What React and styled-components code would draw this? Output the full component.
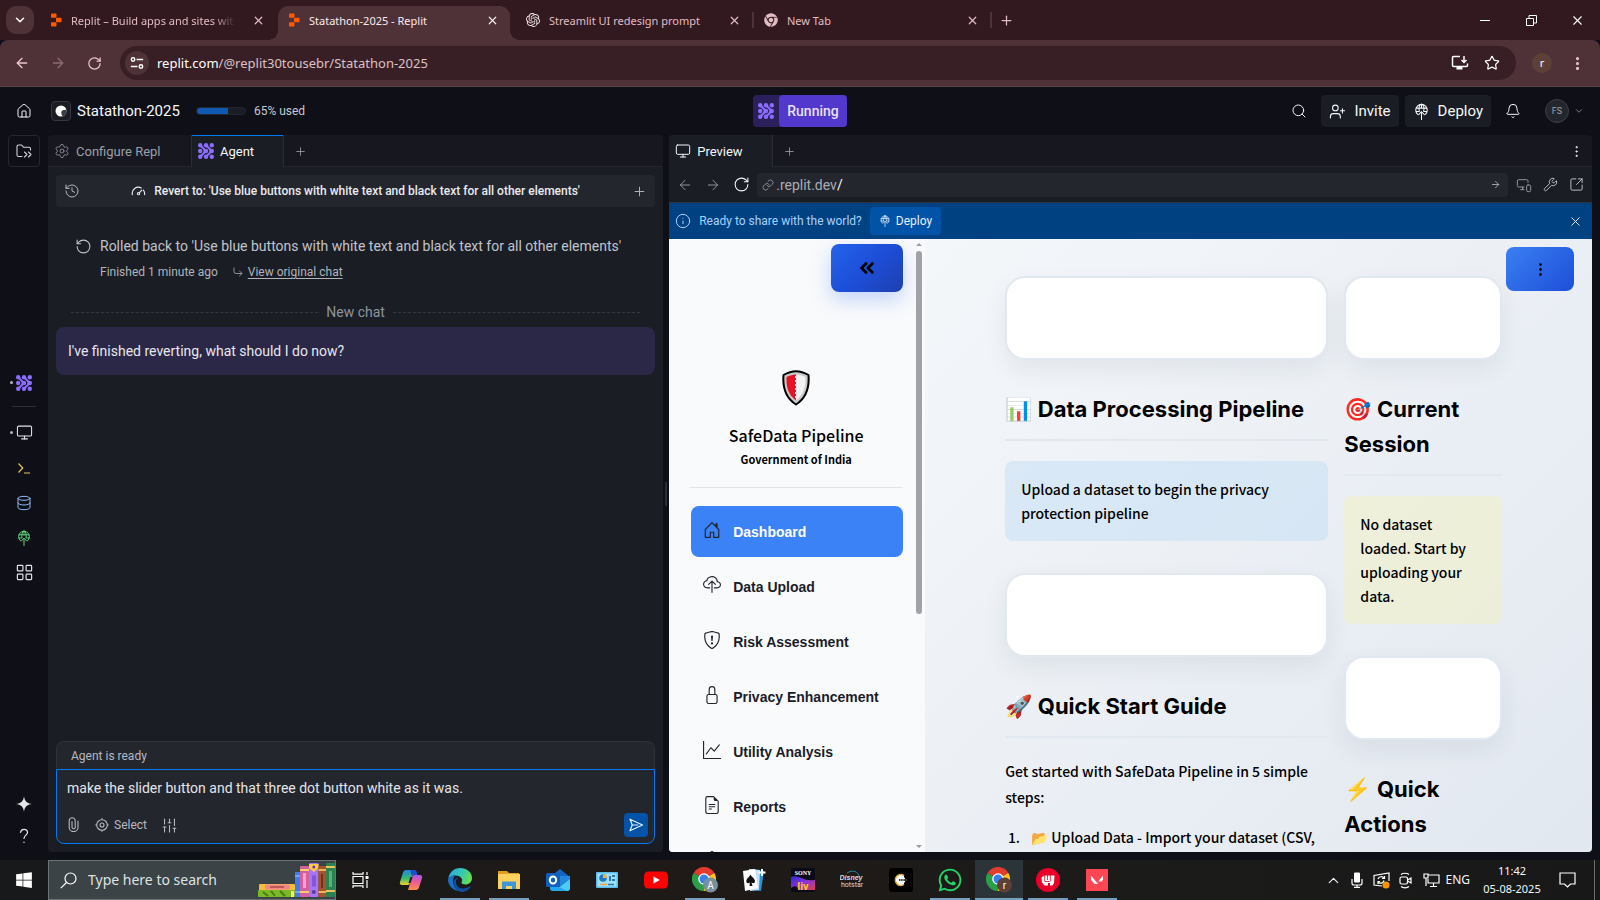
import React from "react";
import styled, { createGlobalStyle, css } from "styled-components";
import {
  House, Search, UserPlus, Bell, ChevronDown, ChevronUp, Monitor, Database, LayoutGrid, Plus,
  History, RotateCcw, RotateCw, CornerDownRight, Link, ArrowLeft, ArrowRight, Wrench, SquareArrowOutUpRight,
  MonitorSmartphone, Info, X, Star, Settings, EllipsisVertical, SlidersVertical, ChevronsLeft,
} from "lucide-react";
import {
  BsHouseDoor, BsCloudUpload, BsShieldExclamation, BsLock, BsGraphUp, BsFileEarmarkText, BsGear,
} from "react-icons/bs";
import { FaWindows, FaChrome, FaWhatsapp } from "react-icons/fa";
import { SiOpenai } from "react-icons/si";

const GlobalStyle = createGlobalStyle`
  *, *::before, *::after { box-sizing: border-box; }
  body { margin: 0; background: #0f0f17; font-family: Roboto, "Liberation Sans", sans-serif; }
  button, input, textarea { font: inherit; color: inherit; background: none; border: 0; padding: 0; margin: 0; outline: 0; }
  button { cursor: pointer; }
  h1, h2, p, ul, ol { margin: 0; padding: 0; }
  svg { display: block; flex: none; }
`;

const segoe = `"Noto Sans", "Open Sans", sans-serif`;
const sourceSans = `"Noto Sans CJK SC", "Noto Sans", sans-serif`;

const Screen = styled.div`
  display: flex;
  flex-direction: column;
  height: 100vh;
  overflow: hidden;
  background: #0f0f17;
  color: #f5f7fa;
`;

/* ---------- Browser frame ---------- */
const TabStrip = styled.div`
  display: flex;
  height: 40px;
  flex: none;
  align-items: flex-end;
  background: #31191f;
  color: #e3bcc3;
  font: 11px/16px ${segoe};
`;
const TabSearch = styled.button`
  display: grid;
  place-items: center;
  width: 28px;
  height: 28px;
  margin: 0 6px 6px;
  border-radius: 10px;
  background: #4f3238;
  color: #fff;
`;
const BrowserTab = styled.div`
  position: relative;
  display: flex;
  align-items: center;
  width: ${(p) => (p.$active ? 232 : 236)}px;
  height: 34px;
  margin: ${(p) => (p.$active ? "0 6px 0 2px" : 0)};
  padding: 0 10px 6px;
  border-radius: 10px 10px 0 0;
  background: ${(p) => (p.$active ? "#4f3238" : "transparent")};
  color: ${(p) => (p.$active ? "#fbe9ec" : "#e3bcc3")};
  ${(p) => p.$active && css`
    &::before, &::after {
      content: "";
      position: absolute;
      bottom: 0;
      width: 10px;
      height: 10px;
    }
    &::before { left: -10px; background: radial-gradient(circle at 0 0, transparent 10px, #4f3238 10px); }
    &::after { right: -10px; background: radial-gradient(circle at 100% 0, transparent 10px, #4f3238 10px); }
  `}
`;
const TabTitle = styled.span`
  flex: 1;
  min-width: 0;
  margin: 2px 12px 0 9px;
  white-space: nowrap;
  overflow: hidden;
`;
const TitleFade = styled.span`
  mask-image: linear-gradient(90deg, #000 calc(100% - 20px), rgba(0, 0, 0, 0.15));
`;
const PlainButton = styled.button`
  display: grid;
  place-items: center;
  flex: none;
  width: ${(p) => p.$w || 16}px;
  height: ${(p) => p.$h || 16}px;
  color: ${(p) => p.$color || "inherit"};
`;
const TabDivider = styled.i`
  width: 2px;
  height: 16px;
  margin-bottom: 12px;
  background: #4f3238;
`;
const NewTab = styled(PlainButton)`
  margin: 0 auto 6px 0;
`;
const WindowControls = styled.div`
  display: flex;
  align-self: stretch;
  color: #fff;
`;

const AddressBar = styled.div`
  display: flex;
  align-items: center;
  flex: none;
  height: 47px;
  padding: 0 6px 0 8px;
  background: #4f3238;
  border-bottom: 1px solid #5a4448;
  border-radius: 8px 8px 0 0;
  color: #edc5cc;
`;
const Omnibox = styled.label`
  display: flex;
  flex: 1;
  align-items: center;
  height: 34px;
  margin: 0 16px 0 12px;
  padding: 0 8px 0 5px;
  border-radius: 17px;
  background: #381f25;
  font: 13px/20px ${segoe};
  color: #fff;
`;
const SiteInfo = styled.span`
  display: grid;
  place-items: center;
  width: 24px;
  height: 24px;
  margin-right: 8px;
  border-radius: 12px;
  background: #4f3238;
`;
const UrlInput = styled.input`
  flex: 1;
  min-width: 0;
  color: #dcc2c6;
`;
const Profile = styled.button`
  width: 20px;
  height: 20px;
  margin-right: 8px;
  border-radius: 10px;
  background: #5d4037;
  color: #fff;
  font: 11px/18px ${segoe};
`;

/* ---------- Replit header ---------- */
const Header = styled.header`
  display: grid;
  grid-template-columns: 1fr auto 1fr;
  align-items: center;
  flex: none;
  height: 48px;
  padding: 0 16px;
`;
const HeaderSide = styled.div`
  display: flex;
  align-items: center;
  justify-content: ${(p) => (p.$end ? "flex-end" : "flex-start")};
`;
const ReplBadge = styled.span`
  display: grid;
  place-items: center;
  width: 20px;
  height: 20px;
  margin: 0 6px 0 19px;
  border: 1px solid #353842;
  border-radius: 4px;
  background: #1a1d24;
`;
const ReplName = styled.h1`
  font: 400 15px/20px Roboto, sans-serif;
`;
const Usage = styled.div`
  display: flex;
  align-items: center;
  gap: 8px;
  margin-left: 16px;
  font-size: 12px;
  color: #c6c9d0;
`;
const Meter = styled.span`
  width: 50px;
  height: 8px;
  border: 1px solid #22252e;
  border-radius: 4px;
  overflow: hidden;
  background: #1a1d24;
  &::before {
    content: "";
    display: block;
    width: 65%;
    height: 100%;
    background: #0f59b0;
  }
`;
const RunPill = styled.div`
  display: flex;
  height: 32px;
  border-radius: 4px;
  background: #2b1f5c;
`;
const RunIcon = styled.span`
  display: grid;
  place-items: center;
  width: 26px;
`;
const RunButton = styled.button`
  width: 68px;
  border-radius: 4px;
  background: #5238cc;
  color: #e6e1fb;
  font-size: 14px;
  font-weight: 500;
`;
const HeaderButton = styled.button`
  display: flex;
  align-items: center;
  gap: 8px;
  height: 32px;
  margin-right: 6px;
  padding: 0 8px;
  border-radius: 4px;
  background: #1a1d24;
  font-size: 15px;
`;
const Avatar = styled.button`
  width: 24px;
  height: 24px;
  margin: 0 5px 0 16px;
  border: 1px solid #3b3e48;
  border-radius: 12px;
  background: #24262e;
  color: #9da2a6;
  font-size: 9px;
`;

/* ---------- Workspace ---------- */
const Workspace = styled.main`
  display: grid;
  grid-template-columns: 48px minmax(0, 2fr) 6px minmax(0, 3fr);
  flex: 1;
  min-height: 0;
  padding: 0 8px 8px 0;
`;
const Rail = styled.nav`
  display: flex;
  flex-direction: column;
  justify-content: space-between;
  align-items: center;
`;
const FolderButton = styled.button`
  display: grid;
  place-items: center;
  width: 32px;
  height: 32px;
  border: 1px solid #252730;
  border-radius: 4px;
  color: #d0d3d9;
`;
const RailGroup = styled.div`
  display: flex;
  flex-direction: column;
  align-items: center;
  padding-top: 5px;
`;
const RailButton = styled.button`
  position: relative;
  display: grid;
  place-items: center;
  width: 32px;
  height: ${(p) => p.$h || 35}px;
  color: ${(p) => p.$color || "#e3e5e9"};
  ${(p) => p.$dot && css`
    &::before {
      content: "";
      position: absolute;
      left: 2px;
      width: 3px;
      height: 3px;
      border-radius: 2px;
      background: #b3b6bd;
    }
  `}
`;
const RailDivider = styled.hr`
  width: 24px;
  height: 1px;
  margin: 6px 0 8px;
  border: 0;
  background: #2b2d36;
`;
const Panel = styled.section`
  display: flex;
  flex-direction: column;
  min-width: 0;
  min-height: 0;
  overflow: hidden;
  border-radius: 4px;
  background: #1a1d24;
`;
const Splitter = styled.div`
  display: grid;
  place-items: center;
  &::before {
    content: "";
    width: 2px;
    height: 24px;
    background: #2b2d36;
  }
`;
const PaneTabs = styled.div`
  display: flex;
  flex: none;
  height: 32px;
  background: linear-gradient(#24262e, #24262e) 0 100% / 100% 1px no-repeat #16171f;
`;
const PaneTab = styled.button`
  display: flex;
  align-items: center;
  gap: 6px;
  width: ${(p) => p.$w}px;
  padding: 0 6px;
  font-size: 13px;
  color: ${(p) => (p.$active ? "#f5f7fa" : "#9ba0a9")};
  ${(p) => p.$active && css`
    background: #1a1d24;
    border-right: 1px solid #2b2d36;
  `}
  ${(p) => p.$focus && css`
    border-left: 1px solid #2b2d36;
    box-shadow: inset 0 1px #0079f2;
  `}
`;
const PaneMore = styled(PlainButton)`
  margin-left: auto;
`;

/* ---------- Agent pane ---------- */
const AgentBody = styled.div`
  display: flex;
  flex-direction: column;
  flex: 1;
  min-height: 0;
  padding: 8px 8px 8px;
`;
const RevertBar = styled.div`
  display: flex;
  align-items: center;
  justify-content: space-between;
  height: 32px;
  padding: 0 8px;
  border-radius: 4px;
  background: #24262e;
  color: #b3b7c0;
`;
const RevertTitle = styled.p`
  display: flex;
  align-items: center;
  gap: 8px;
  color: #e9ebef;
  font-size: 12px;
  font-weight: 500;
  white-space: nowrap;
`;
const Rollback = styled.div`
  display: grid;
  grid-template-columns: 16px 1fr;
  column-gap: 9px;
  row-gap: 6px;
  align-items: center;
  margin-top: 29px;
  padding-left: 19px;
  color: #c0c4cc;
  font-size: 14px;
  line-height: 20px;
  white-space: nowrap;
`;
const RollbackMeta = styled.p`
  display: flex;
  align-items: center;
  grid-column: 2;
  gap: 4px;
  font-size: 12px;
  color: #b0b4bc;
  > svg { margin-left: 10px; }
  a { color: inherit; text-underline-offset: 2px; }
`;
const ChatDivider = styled.div`
  display: flex;
  align-items: center;
  gap: 8px;
  margin: 20px 15px 0;
  color: #8f949d;
  font-size: 14px;
  line-height: 20px;
  &::before, &::after {
    content: "";
    flex: 1;
    border-top: 1px dashed #353842;
  }
`;
const AgentMessage = styled.p`
  margin-top: 5px;
  padding: 14px 12px;
  border-radius: 8px;
  background: #2b2746;
  color: #e6e7ee;
  font-size: 14px;
  line-height: 20px;
`;
const Composer = styled.form`
  margin-top: auto;
`;
const ComposerStatus = styled.p`
  height: 28px;
  padding: 0 14px;
  border: 1px solid #2f313b;
  border-bottom: 0;
  border-radius: 8px 8px 0 0;
  background: #24262e;
  color: #b5b9c1;
  font-size: 12px;
  line-height: 28px;
`;
const ComposerBox = styled.div`
  border: 1px solid #0079f2;
  border-radius: 0 0 8px 8px;
  background: #24262e;
`;
const Prompt = styled.textarea`
  display: block;
  width: 100%;
  height: 36px;
  padding: 8px 10px;
  resize: none;
  overflow: hidden;
  color: #e3e5ea;
  font-size: 14px;
  line-height: 20px;
`;
const ComposerTools = styled.div`
  display: flex;
  align-items: center;
  gap: 14px;
  height: 37px;
  padding: 0 6px 0 8px;
  color: #b5b9c1;
  font-size: 12px;
`;
const SelectTool = styled.button`
  display: flex;
  align-items: center;
  gap: 5px;
`;
const SendButton = styled.button`
  display: grid;
  place-items: center;
  width: 24px;
  height: 24px;
  margin-left: auto;
  border-radius: 4px;
  background: #0053a6;
`;

/* ---------- Preview pane ---------- */
const NavBar = styled.div`
  display: flex;
  align-items: center;
  flex: none;
  height: 36px;
  padding: 0 3px 0 2px;
  border-bottom: 1px solid #2f313b;
  color: #8f949d;
`;
const UrlBox = styled.label`
  display: flex;
  align-items: center;
  flex: 1;
  height: 24px;
  margin: 0 3px 0 2px;
  padding: 0 2px 0 5px;
  border-radius: 4px;
  background: #24262e;
  color: #a9adb5;
  font-size: 14px;
  > svg { margin-right: 2px; }
`;
const PathInput = styled.input`
  flex: 1;
  min-width: 0;
  color: #f5f7fa;
`;
const ShareBar = styled.div`
  display: flex;
  align-items: center;
  flex: none;
  gap: 8px;
  height: 36px;
  padding: 0 9px 0 6px;
  background: #004182;
  color: #a6d2ff;
  font-size: 12px;
`;
const ShareDeploy = styled.button`
  display: flex;
  align-items: center;
  gap: 5px;
  height: 28px;
  margin-right: auto;
  padding: 0 9px;
  border-radius: 4px;
  background: #0053a6;
  color: #e6f2ff;
`;
const Site = styled.div`
  position: relative;
  display: flex;
  flex: 1;
  min-height: 0;
  color: #000;
  background: linear-gradient(135deg, #f8fafc 0%, #e2e8f0 100%);
`;
const Sidebar = styled.aside`
  display: flex;
  flex: none;
  width: 256px;
  overflow: hidden;
  background: #f9fafc;
`;
const SidebarBody = styled.div`
  display: flex;
  flex-direction: column;
  flex: 1;
  padding: 5px 10px 0 20px;
`;
const GradientButton = styled.button`
  display: grid;
  place-items: center;
  border-radius: 8px;
  color: #000;
`;
const CollapseButton = styled(GradientButton)`
  flex: none;
  align-self: flex-end;
  width: 72px;
  height: 48px;
  background: linear-gradient(135deg, #2563eb 0%, #1d4ed8 50%, #1e40af 100%);
  box-shadow: 0 8px 20px rgba(37, 99, 235, 0.25);
`;
const SiteMenuButton = styled(GradientButton)`
  position: absolute;
  top: 8px;
  right: 18px;
  width: 68px;
  height: 44px;
  background: linear-gradient(135deg, #3b7ff3 0%, #1d4fd8 100%);
`;
const Brand = styled.div`
  display: flex;
  flex: none;
  flex-direction: column;
  align-items: center;
  margin-top: 78px;
  padding-bottom: 18px;
  border-bottom: 1px solid #e2e5ea;
  font-family: ${sourceSans};
`;
const BrandName = styled.h2`
  margin-top: 17px;
  font-size: 16px;
  font-weight: 500;
  line-height: 24px;
`;
const BrandSub = styled.p`
  margin-top: 2px;
  font-size: 11px;
  font-weight: 700;
  line-height: 20px;
`;
const SiteNav = styled.nav`
  display: flex;
  flex-direction: column;
  gap: 4px;
  padding: 18px 0 0 2px;
`;
const SiteLink = styled.a`
  display: flex;
  align-items: center;
  flex: none;
  gap: 12px;
  height: 51px;
  padding: 0 12px;
  border-radius: 8px;
  background: ${(p) => (p.$active ? "#3b82f6" : "transparent")};
  color: ${(p) => (p.$active ? "#fff" : "#1a1d29")};
  font: bold 14px/20px "Liberation Sans", Arial, sans-serif;
  text-decoration: none;
  svg { margin-bottom: 4px; color: #212529; }
`;
const ScrollRail = styled.div`
  display: flex;
  flex-direction: column;
  align-items: center;
  width: 12px;
  padding: 4px 0;
  color: #9c9ca3;
  &::before {
    content: "";
    border: 3px solid transparent;
    border-top: 0;
    border-bottom: 3px solid currentColor;
  }
  &::after {
    content: "";
    margin-top: auto;
    border: 3px solid transparent;
    border-bottom: 0;
    border-top: 3px solid currentColor;
  }
`;
const ScrollThumb = styled.i`
  width: 6px;
  height: 60%;
  margin-top: 5px;
  border-radius: 3px;
  background: #a1a1aa;
`;
const SiteMain = styled.div`
  display: grid;
  grid-template-columns: minmax(0, 205fr) minmax(0, 100fr);
  gap: 16px;
  flex: 1;
  align-items: start;
  overflow: hidden;
  padding: 37px 90px 0 80px;
  font: 500 14px/24px ${sourceSans};
`;
const Card = styled.div`
  height: 84px;
  border: 2px solid #e2e8f0;
  border-radius: 20px;
  background: #fff;
  box-shadow: 0 10px 24px rgba(30, 41, 59, 0.07);
`;
const SectionTitle = styled.h2`
  margin: 32px 0 20px;
  padding-bottom: 12px;
  border-bottom: 2px solid #e2e8f0;
  font: 700 22px/35px Inter, "Noto Color Emoji", sans-serif;
`;
const Notice = styled.p`
  margin-bottom: 32px;
  padding: 16px 24px 16px 16px;
  border-radius: 8px;
  background: ${(p) => (p.$warn ? "rgba(240, 240, 200, 0.6)" : "rgba(191, 219, 245, 0.45)")};
`;
const Intro = styled.p`
  line-height: 26px;
`;
const Steps = styled.ol`
  margin-top: 14px;
  padding-left: 18px;
  line-height: 26px;
  white-space: nowrap;
  li { padding-left: 8px; }
`;

/* ---------- Taskbar ---------- */
const Taskbar = styled.footer`
  display: flex;
  flex: none;
  height: 40px;
  background: linear-gradient(90deg, #17191a, #1f1a17 45%, #1b1b1a 70%, #171817);
  font: 12px/18px ${segoe};
`;
const WinSearch = styled.label`
  display: flex;
  align-items: center;
  width: 288px;
  padding-left: 11px;
  border: 1px solid #6d7476;
  background: #3b4346;
`;
const WinSearchInput = styled.input`
  flex: 1;
  min-width: 0;
  margin-left: 11px;
  font-size: 14px;
  &::placeholder { color: #dfe2e3; opacity: 1; }
`;
const TaskButton = styled.button`
  display: grid;
  place-items: center;
  flex: none;
  width: 48px;
  margin-right: ${(p) => p.$gap || 1}px;
  color: #fff;
  background:
    linear-gradient(#76a0ba, #76a0ba) 50% 100% / ${(p) => (p.$active ? 48 : p.$open ? 40 : 0)}px 2px no-repeat
    ${(p) => (p.$active ? "#2b3438" : "transparent")};
`;
const Tray = styled.div`
  display: flex;
  align-items: center;
  margin-left: auto;
`;
const Clock = styled.time`
  width: 60px;
  margin: 0 16px 0 12px;
  font-size: 11px;
  text-align: center;
`;
const DesktopEdge = styled.i`
  align-self: stretch;
  width: 6px;
  margin-left: 18px;
  border-left: 1px solid #6d6d6d;
`;

/* ---------- Drawings ---------- */
const ReplitMark = () => (
  <svg width="12" height="14" viewBox="0 0 12 14" fill="#ff5a00">
    <rect x="1" y="0.5" width="5.5" height="4.3" rx="0.8" />
    <rect x="6" y="4.8" width="5.5" height="4.4" rx="0.8" />
    <rect x="1" y="9.2" width="5.5" height="4.3" rx="0.8" />
  </svg>
);
const AgentMark = () => (
  <svg width="16" height="16" viewBox="0 0 16 16" fill="#8b6dff" stroke="#8b6dff" strokeWidth="1.6">
    {[2.2, 8, 13.8].map((y) => [2.2, 8, 13.8].map((x) => <circle key={x + "-" + y} cx={x} cy={y} r="2.2" stroke="none" />))}
    <path d="M2.200 2.200 8 8l-5.800 5.800M8 2.200 13.800 8 8 13.800" fill="none" strokeWidth="2" />
    <path d="M5.500 5.500v5L9 8zM11.300 5.500v5L15 8z" stroke="none" />
  </svg>
);
const GlobeUp = ({ size = 16 }) => (
  <svg width={size} height={size} viewBox="0 0 16 16" fill="none" stroke="currentColor" strokeWidth="1" strokeLinecap="round">
    <path d="M4.300 10.600A5.400 5.400 0 1 1 11.700 10.600M3 4.800H13M2.700 8H5.500M10.500 8H13.300M6 7.800C5.200 5 6 2 8 1M10 7.800C10.800 5 10 2 8 1M8 15.500V8.500M5.300 11 8 8.200 10.700 11M8 1V5" />
  </svg>
);
const FolderIcon = () => (
  <svg width="16" height="16" viewBox="0 0 16 16" fill="none" stroke="currentColor" strokeWidth="1.1" strokeLinecap="round" strokeLinejoin="round">
    <path d="M6 13.500H2.500a1.500 1.500 0 0 1-1.500-1.500V3.500A1.500 1.500 0 0 1 2.500 2H5.500L7.500 4.200H13A1.500 1.500 0 0 1 14.500 5.700V7M8.500 9 11 11.500 8.500 14M12.500 9 15 11.500 12.500 14" />
  </svg>
);
const ProjectMark = () => (
  <svg width="14" height="14" viewBox="0 0 14 14">
    <circle cx="7" cy="7" r="5.500" fill="#fff" />
    <path d="M12.300 5.500C10 6.300 7 5.800 7.300 9c.1 1.500.8 2.500 1.200 3.300a5.500 5.500 0 0 0 3.800-6.800z" fill="#3a3d44" />
  </svg>
);
const Terminal = () => (
  <svg width="16" height="16" viewBox="0 0 16 16" fill="none" stroke="currentColor" strokeWidth="1.200">
    <path d="M2.500 3.500 6.800 8l-4.300 4.500M8 13h6" />
  </svg>
);
const Sparkle = () => (
  <svg width="16" height="16" viewBox="0 0 16 16" fill="currentColor">
    <path d="M8 0C8.400 5 11 7.600 16 8 11 8.400 8.400 11 8 16 7.600 11 5 8.400 0 8 5 7.600 7.600 5 8 0z" />
  </svg>
);
const Help = () => (
  <svg width="16" height="16" viewBox="0 0 16 16" fill="none" stroke="currentColor" strokeWidth="1.200" strokeLinecap="round">
    <path d="M4.500 4.300C5 2 6.500 1.300 8 1.300c2 0 3.500 1.200 3.500 3.100C11.500 7 8 7.300 8 10.500M8 14v.4" />
  </svg>
);
const Speed = () => (
  <svg width="15" height="15" viewBox="0 0 16 16" fill="none" stroke="currentColor" strokeWidth="1.200" strokeLinecap="round">
    <path d="M1.500 11.500A6.500 6.500 0 0 1 11 4.300M13.200 6.500a6.500 6.500 0 0 1 1.300 5M8.800 9.400 11.500 6.500" />
    <circle cx="8" cy="10.300" r="1.200" />
  </svg>
);
const Clip = () => (
  <svg width="11" height="15" viewBox="0 0 11 15" fill="none" stroke="currentColor" strokeWidth="1.100" strokeLinecap="round">
    <path d="M10 4v6.200a4.300 4.300 0 0 1-8.800 0V3.700a3 3 0 0 1 6 0v6.500a1.600 1.600 0 0 1-3.200 0V4.500" />
  </svg>
);
const Target = () => (
  <svg width="14" height="14" viewBox="0 0 14 14" fill="none" stroke="currentColor" strokeWidth="1.100">
    <circle cx="7" cy="7" r="5.300" /><circle cx="7" cy="7" r="2" />
    <path d="M7 .3V2M7 12v1.700M.3 7H2M12 7h1.700" />
  </svg>
);
const Send = () => (
  <svg width="16" height="16" viewBox="0 0 16 16" fill="none" stroke="#e6f2ff" strokeWidth="1.200" strokeLinejoin="round">
    <path d="M2 2.200 14.500 8 2 13.800 4.200 8zM4.200 8h6" />
  </svg>
);
const Tune = () => (
  <svg width="14" height="14" viewBox="0 0 16 16" fill="none" stroke="currentColor" strokeWidth="1.600">
    <circle cx="3.500" cy="4" r="2" /><path d="M7.500 4H15M1 12h7.500" /><circle cx="12.500" cy="12" r="2" />
  </svg>
);
const Install = () => (
  <svg width="18" height="16" viewBox="0 0 18 16" fill="none" stroke="currentColor" strokeWidth="1.500">
    <path d="M9 1.500H2.500A1 1 0 0 0 1.500 2.500V10.500a1 1 0 0 0 1 1H15.500a1 1 0 0 0 1-1V8.500M13 1v6M10.500 5 13 7.500 15.500 5" />
    <path d="M5.500 12h6v2.500h-6z" fill="currentColor" stroke="none" />
  </svg>
);
const Minimize = () => <svg width="10" height="10" viewBox="0 0 10 10"><path d="M0 5.500h10" stroke="#fff" /></svg>;
const Restore = () => (
  <svg width="11" height="11" viewBox="0 0 11 11" fill="none" stroke="#fff"><path d="M.5 3.500h7v7h-7zM3 3.500V.5h7.500V8H7.500" /></svg>
);
const Shield = () => (
  <svg width="28" height="36" viewBox="0 0 28 36">
    <path d="M14 1.200C18 1.200 23 3 26.500 5 27.500 17 24 28 14 34.500 4 28 .5 17 1.500 5 5 3 10 1.200 14 1.200z" fill="#c9c9c9" stroke="#000" strokeWidth="2" />
    <path d="M14 4.500c3 0 6.500 1 9.500 2.500C24 17 21.500 25 14 30.500z" fill="#f2f2f2" />
    <path d="M14 4.500C11 4.500 7.500 5.500 4.500 7 4 17 6.500 25 14 30.500z" fill="#e81224" />
    <path d="M14 6v23" stroke="#f2f2f2" strokeWidth="2" strokeDasharray="2 2" />
  </svg>
);
const Books = () => (
  <svg width="77" height="34" viewBox="0 0 77 34">
    <rect x="1" y="21" width="36" height="7" rx="1" fill="#f5bd3c" /><rect x="7" y="21.500" width="25" height="5" rx="2" fill="#f0868a" /><rect x="12" y="23" width="14" height="2" fill="#bb5957" />
    <rect x="0" y="27" width="37" height="7" rx="1" fill="#7bb928" /><path d="M5 29l5 4M13 28l4 5M22 28l5 5" stroke="#477d18" strokeWidth="2" /><path d="M33 28h3v6h-3z" fill="#ffe079" />
    <rect x="37" y="9" width="5" height="25" fill="#3c7df0" /><path d="M37 13h5M37 29h5" stroke="#a9d0ff" />
    <rect x="42" y="3" width="9" height="31" rx="1" fill="#d5609f" /><path d="M42 7h9M42 29h9" stroke="#ffd06b" strokeWidth="2" /><rect x="45" y="10" width="3" height="15" fill="#f3a2cd" />
    <rect x="51" y="0" width="9.500" height="34" rx="1" fill="#a675f2" /><path d="M51 1h9.500v4L55.800 9 51 5z" fill="#ffcc3f" /><circle cx="55.800" cy="4" r="1.500" fill="#6b35ad" /><rect x="54" y="12" width="4" height="12" rx="2" fill="#7b5ad9" /><circle cx="55.800" cy="29" r="2" fill="#5a3d9d" />
    <rect x="60.500" y="3" width="7.500" height="31" fill="#a9532a" /><path d="M60.500 7h7.500M60.500 29h7.500" stroke="#eeb655" strokeWidth="2" /><rect x="63" y="11" width="2" height="14" fill="#753216" />
    <rect x="68" y="0" width="9" height="34" rx="1" fill="#29824f" /><path d="M68 4h9M68 28h9" stroke="#ecc45d" strokeWidth="2" /><rect x="71" y="8" width="3" height="16" fill="#5eae7a" />
  </svg>
);
const TaskView = () => (
  <svg width="17" height="16" viewBox="0 0 17 16" fill="none" stroke="#fff" strokeWidth="1.200">
    <path d="M1 4.500h10v7H1zM1 0v2.200h10V0M1 16v-2.200h10V16M15 0v3M15 8v8" /><rect x="13.500" y="4" width="3" height="3" fill="#fff" stroke="none" />
  </svg>
);
const Copilot = () => (
  <svg width="24" height="24" viewBox="0 0 24 24">
    <defs>
      <linearGradient id="cp1" x1="0" y1="0" x2="0" y2="1"><stop offset="0" stopColor="#2386e8" /><stop offset=".55" stopColor="#35b86e" /><stop offset="1" stopColor="#f4d02c" /></linearGradient>
      <linearGradient id="cp2" x1="0" y1="0" x2="0" y2="1"><stop offset="0" stopColor="#a457e8" /><stop offset=".5" stopColor="#ef5c93" /><stop offset="1" stopColor="#f9924b" /></linearGradient>
    </defs>
    <path d="M7 2h8l-4 13c-.500 1.500-1 2-3 2H3c-2 0-2.500-1.500-2-3L4 4.500C4.500 3 5.500 2 7 2z" fill="url(#cp1)" />
    <path d="M11 2h4.500c1.500 0 2 1 2.500 3l.5 2h-6z" fill="#1c50c4" />
    <path d="M17 22H9l4-13c.500-1.500 1-2 3-2h5c2 0 2.500 1.500 2 3l-3 9.500C19.500 21 18.500 22 17 22z" fill="url(#cp2)" />
    <path d="M11.500 9h2l-2 6h-2z" fill="#1c1a19" />
  </svg>
);
const Edge = () => (
  <svg width="24" height="24" viewBox="0 0 24 24">
    <defs>
      <linearGradient id="ed1" x1="0" y1="0" x2="1" y2=".3"><stop offset="0" stopColor="#2aa6e0" /><stop offset=".6" stopColor="#35c7b5" /><stop offset="1" stopColor="#63dd55" /></linearGradient>
    </defs>
    <path d="M.3 11C1 4.500 6 0 12 0c7 0 12 4.500 12 10 0 4-3 6.500-6.500 6.500-3 0-4.500-1-4-2.500.7-1 .8-2 .3-3.200C12.500 8 9 7 6 7.500 3 8 1 9.500.3 11z" fill="url(#ed1)" />
    <path d="M0 12.500C.5 8.500 4 7 7.500 7.500c-3 2-3.500 7-1 10.500 2 3 6 4.500 9.500 4.300A12 12 0 0 1 0 12.500z" fill="#1674c9" />
    <path d="M8 13c-.500 4 2.500 7.500 7 7.500 3 0 5.500-1.300 6.800-2.200.7-.300 1 .2.700.7C21 21.500 18 24 13.500 24 8 23 5 19 5.500 15c.3-3 2-5.500 5-5.500C9 10.500 8.200 11.500 8 13z" fill="#104f9d" />
  </svg>
);
const Explorer = () => (
  <svg width="24" height="24" viewBox="0 0 24 24"><path d="M1 3h9l2 2h10v4H1z" fill="#e09f1d" /><path d="M1 6h22v15H1z" fill="#ffd25e" /><path d="M5 21v-7.500h14V21h-4v-3H9v3z" fill="#3e95d8" /></svg>
);
const Outlook = () => (
  <svg width="24" height="24" viewBox="0 0 24 24"><path d="M4 9 14 1l10 8v11a3 3 0 0 1-3 3H7a3 3 0 0 1-3-3z" fill="#1565c0" /><path d="M8 8h16v3L15 17H8z" fill="#2387dd" /><path d="M24 11v9a3 3 0 0 1-3 3H8z" fill="#4ccbf5" /><path d="M4 14l17 9H7a3 3 0 0 1-3-3z" fill="#26a7ec" /><rect x="0" y="5" width="14" height="14" rx="1.500" fill="#0f5fbd" /><ellipse cx="7" cy="12" rx="3.200" ry="3.600" fill="none" stroke="#fff" strokeWidth="2" /></svg>
);
const ControlPanel = () => (
  <svg width="24" height="24" viewBox="0 0 24 24"><rect x="1" y="4" width="22" height="16" rx="1" fill="#5bbcf0" /><rect x="2.500" y="5.500" width="19" height="13" fill="#9fe0ff" /><circle cx="8" cy="10" r="3.800" fill="#2478bd" /><path d="M8 10V6.200A3.800 3.800 0 0 1 11.800 10z" fill="#ffb02e" /><path d="M14 8h2v5h-2M17 7h3v2h-3zM17 11h3v2h-3z" fill="#2478bd" /><path d="M5 16.500h7" stroke="#ffa32e" strokeWidth="1.500" /><path d="M13 16.500h6" stroke="#2478bd" strokeWidth="1.500" /></svg>
);
const Youtube = () => (
  <svg width="24" height="24" viewBox="0 0 24 24"><rect x="0" y="3.500" width="24" height="17" rx="4.500" fill="#f00" /><path d="M9.500 8.500v7L16 12z" fill="#fff" /></svg>
);
const Chrome = ({ badge, color }) => (
  <svg width="27" height="26" viewBox="0 0 27 26">
    <path d="M12 12 1.600 6A12 12 0 0 1 22.400 6z" fill="#e33b2e" />
    <path d="M12 12 22.400 6A12 12 0 0 1 12 24z" fill="#fcc31e" />
    <path d="M12 12v12A12 12 0 0 1 1.600 6z" fill="#2b9f48" />
    <circle cx="12" cy="12" r="5.800" fill="#fff" /><circle cx="12" cy="12" r="4.500" fill="#3a7ff0" />
    <circle cx="18.500" cy="18" r="7.500" fill={color} />
    <text x="18.500" y="21.500" textAnchor="middle" fill="#fff" fontSize="10" fontFamily="Roboto, sans-serif">{badge}</text>
  </svg>
);
const Cards = () => (
  <svg width="24" height="24" viewBox="0 0 24 24"><path d="M10 1l12 2-3 20-9-1z" fill="#2d8fd0" /><path d="M7 1l11 1-1 20-9 1z" fill="#bfe4fa" /><path d="M1 3l12-2 3 19-13 3z" fill="#fff" /><path d="M8.500 6.500c1 2.500 4.500 4 4.500 6.800 0 2-2.500 2.500-3.500 1L10.500 18h-3l.3-3.500c-1.200 1.300-3.500.8-3.500-1.200 0-2.800 3.200-4.500 4.200-6.800z" fill="#111" /><path d="M20 1v7M16.500 4.500h7" stroke="#fff" strokeWidth="2" /></svg>
);
const SonyLiv = () => (
  <svg width="24" height="24" viewBox="0 0 24 24">
    <defs><linearGradient id="sl" x1="0" y1="0" x2="1" y2="1"><stop offset="0" stopColor="#2b2bd6" /><stop offset=".5" stopColor="#8a30d9" /><stop offset="1" stopColor="#e0404f" /></linearGradient></defs>
    <rect width="24" height="24" rx="2" fill="#0a0a18" /><path d="M0 9c8-3 12 5 24 3v10H0z" fill="url(#sl)" /><path d="M0 20c6-4 6 0 10 4H0z" fill="#0a0a18" />
    <text x="12" y="7" textAnchor="middle" fill="#fff" fontSize="6" fontWeight="700" fontFamily="Liberation Serif, serif">SONY</text>
    <text x="12" y="22" textAnchor="middle" fill="#ffc12b" fontSize="11" fontWeight="700" fontFamily="Roboto, sans-serif">liv</text>
  </svg>
);
const Hotstar = () => (
  <svg width="24" height="24" viewBox="0 0 24 24"><path d="M7 5c6-4 12-1 12 4" fill="none" stroke="#2f8aa8" /><text x="11" y="12" textAnchor="middle" fill="#d6dde0" fontSize="7" fontWeight="700" fontFamily="Liberation Sans, sans-serif" fontStyle="italic">Disney</text><text x="12" y="19" textAnchor="middle" fill="#d6dde0" fontSize="7" fontFamily="Roboto, sans-serif">hotstar</text></svg>
);
const Zee = () => (
  <svg width="24" height="24" viewBox="0 0 24 24"><rect width="24" height="24" rx="3" fill="#000" /><path d="M15 7.500A5.500 5.500 0 1 0 15 16.500" fill="#fff" stroke="#e8a33a" strokeWidth="1.500" /><circle cx="12" cy="12" r="4.300" fill="#fff" /><path d="M10 12h8" stroke="#333" strokeWidth="1.800" strokeDasharray="1.500 .7" /></svg>
);
const Riot = () => (
  <svg width="24" height="24" viewBox="0 0 24 24"><circle cx="12" cy="12" r="12" fill="#eb0029" /><path d="M5.500 9.500 8 7.500h10.500L18 15l-1.500 2.500H14V15h-2v2.500H8.500L6 14.500z" fill="#fff" /><path d="M8.700 7v6M11.500 7v5M14.300 7v5M8.500 13.500h5l2-1.500" fill="none" stroke="#eb0029" strokeWidth=".8" /></svg>
);
const Valorant = () => (
  <svg width="22" height="22" viewBox="0 0 22 22"><path d="M0 0h22v22H0z" fill="#ff4655" /><path d="M5 6.500 12 15H8.500L5 10.700zM17 6.500v4.200L15.500 12.500H12.200z" fill="#fff" /></svg>
);
const Loupe = () => (
  <svg width="17" height="17" viewBox="0 0 17 17" fill="none" stroke="#fff" strokeWidth="1.200"><circle cx="10.500" cy="6.500" r="5.500" /><path d="M6.500 10.500.8 16.200" /></svg>
);
const Mic = () => (
  <svg width="12" height="16" viewBox="0 0 12 16" fill="none" stroke="#fff" strokeWidth="1.200"><rect x="3" y=".5" width="6" height="10" rx="1" fill="#fff" stroke="none" /><path d="M1 7v4a2 2 0 0 0 2 2h6a2 2 0 0 0 2-2V7M6 13v2M3 15.300h6" /></svg>
);
const Sync = () => (
  <svg width="17" height="17" viewBox="0 0 17 17" fill="none" stroke="#fff" strokeWidth="1.200"><path d="M9 14 1 13V3.500L16 1v8M5 7a3.500 3.500 0 0 1 6-1M11.500 4v2.500H9M11 8.500a3.500 3.500 0 0 1-6 1.500M5 12V9.500h2" /><circle cx="13" cy="13" r="3.500" fill="#ff9500" stroke="none" /></svg>
);
const MeetNow = () => (
  <svg width="13" height="17" viewBox="0 0 13 17" fill="none" stroke="#fff" strokeWidth="1.200"><rect x="1" y="5" width="7.500" height="7" rx="1.500" /><path d="m8.500 8 3.500-2v5L8.500 9M2 2.500C4 .8 8 .8 10 2.500M2 14.500c2 1.700 6 1.700 8 0" /></svg>
);
const Network = () => (
  <svg width="17" height="15" viewBox="0 0 17 15" fill="none" stroke="#fff" strokeWidth="1.200"><path d="M5.500 2H16v8H5V6M10.500 10v3M7 13.500h7M1 1h4v4H1zM3 5v8" /></svg>
);
const Bubble = () => (
  <svg width="17" height="16" viewBox="0 0 17 16" fill="none" stroke="#fff" strokeWidth="1.200"><path d="M1 1h15v11h-4.500l-3 3-3-3H1z" /></svg>
);

const TABS = [
  { title: <TitleFade>Replit – Build apps and sites wit</TitleFade>, icon: <ReplitMark /> },
  { title: "Statathon-2025 - Replit", icon: <ReplitMark />, active: true },
  { title: "Streamlit UI redesign prompt", icon: <SiOpenai size={14} color="#f3e6e8" />, divider: true },
  { title: "New Tab", icon: <FaChrome size={14} />, divider: true },
];

const SITE_LINKS = [
  ["Dashboard", <BsHouseDoor size={18} />, true],
  ["Data Upload", <BsCloudUpload size={18} />],
  ["Risk Assessment", <BsShieldExclamation size={18} />],
  ["Privacy Enhancement", <BsLock size={18} />],
  ["Utility Analysis", <BsGraphUp size={18} />],
  ["Reports", <BsFileEarmarkText size={18} />],
];

const TASKS = [
  ["Copilot", <Copilot />],
  ["Edge", <Edge />, "open"],
  ["File Explorer", <Explorer />, "open"],
  ["Outlook", <Outlook />],
  ["Control Panel", <ControlPanel />],
  ["YouTube", <Youtube />],
  ["Chrome", <Chrome badge="A" color="#78909c" />, "open"],
  ["Solitaire", <Cards />],
  ["SonyLIV", <SonyLiv />],
  ["Hotstar", <Hotstar />],
  ["ZEE5", <Zee />],
  ["WhatsApp", <FaWhatsapp size={26} color="#25d366" />, "open"],
  ["Chrome profile r", <Chrome badge="r" color="#5d4037" />, "active"],
  ["Riot Client", <Riot />, "open"],
  ["Valorant", <Valorant />, "open"],
];

const thin = { strokeWidth: 1.5 };

function BrowserFrame() {
  return (
    <>
      <TabStrip>
        <TabSearch aria-label="Search tabs"><ChevronDown size={14} strokeWidth={2.5} /></TabSearch>
        {TABS.map((t, i) => (
          <React.Fragment key={i}>
            <BrowserTab $active={t.active}>
              {t.icon}
              <TabTitle>{t.title}</TabTitle>
              <PlainButton aria-label="Close tab"><X size={13} strokeWidth={2.2} /></PlainButton>
            </BrowserTab>
            {t.divider && <TabDivider />}
          </React.Fragment>
        ))}
        <NewTab $w={28} $h={28} aria-label="New tab"><Plus size={15} strokeWidth={2} /></NewTab>
        <WindowControls>
          <PlainButton $w={46} $h={40} aria-label="Minimize"><Minimize /></PlainButton>
          <PlainButton $w={46} $h={40} aria-label="Restore"><Restore /></PlainButton>
          <PlainButton $w={46} $h={40} aria-label="Close"><X size={15} strokeWidth={1.8} /></PlainButton>
        </WindowControls>
      </TabStrip>
      <AddressBar>
        <PlainButton $w={28} $h={28} aria-label="Back"><ArrowLeft size={16} /></PlainButton>
        <PlainButton $w={44} $h={28} $color="#8d6c72" aria-label="Forward"><ArrowRight size={16} /></PlainButton>
        <PlainButton $w={28} $h={28} aria-label="Reload"><RotateCw size={15} /></PlainButton>
        <Omnibox>
          <SiteInfo><Tune /></SiteInfo>
          replit.com
          <UrlInput aria-label="Address" defaultValue="/@replit30tousebr/Statathon-2025" />
          <PlainButton $w={32} $h={28} aria-label="Install app"><Install /></PlainButton>
          <PlainButton $w={32} $h={28} aria-label="Bookmark"><Star size={16} strokeWidth={1.8} /></PlainButton>
        </Omnibox>
        <Profile aria-label="Profile">r</Profile>
        <PlainButton $w={34} $h={28} aria-label="Menu"><EllipsisVertical size={17} strokeWidth={2.5} /></PlainButton>
      </AddressBar>
    </>
  );
}

function ReplitHeader() {
  return (
    <Header>
      <HeaderSide>
        <PlainButton aria-label="Home"><House size={16} {...thin} /></PlainButton>
        <ReplBadge><ProjectMark /></ReplBadge>
        <ReplName>Statathon-2025</ReplName>
        <Usage><Meter />65% used</Usage>
      </HeaderSide>
      <RunPill>
        <RunIcon><AgentMark /></RunIcon>
        <RunButton>Running</RunButton>
      </RunPill>
      <HeaderSide $end>
        <PlainButton $w={44} $h={32} aria-label="Search"><Search size={16} {...thin} /></PlainButton>
        <HeaderButton><UserPlus size={17} {...thin} />Invite</HeaderButton>
        <HeaderButton><GlobeUp size={17} />Deploy</HeaderButton>
        <PlainButton $w={32} $h={32} aria-label="Notifications"><Bell size={16} {...thin} /></PlainButton>
        <Avatar>FS</Avatar>
        <ChevronDown size={10} color="#8f949d" />
      </HeaderSide>
    </Header>
  );
}

function SideRail() {
  return (
    <Rail>
      <FolderButton aria-label="Files"><FolderIcon /></FolderButton>
      <RailGroup>
        <RailButton $dot aria-label="Agent"><AgentMark /></RailButton>
        <RailDivider />
        <RailButton $dot aria-label="Preview"><Monitor size={17} {...thin} /></RailButton>
        <RailButton $color="#e5c55c" aria-label="Console"><Terminal /></RailButton>
        <RailButton $color="#8fbdf2" aria-label="Database"><Database size={16} {...thin} /></RailButton>
        <RailButton $color="#5fd47a" aria-label="Deployments"><GlobeUp /></RailButton>
        <RailButton aria-label="All tools"><LayoutGrid size={19} {...thin} /></RailButton>
      </RailGroup>
      <RailGroup>
        <RailButton $h={32} aria-label="Assistant"><Sparkle /></RailButton>
        <RailButton $h={32} aria-label="Help"><Help /></RailButton>
      </RailGroup>
    </Rail>
  );
}

function AgentPane() {
  return (
    <Panel>
      <PaneTabs>
        <PaneTab $w={143}><Settings size={16} strokeWidth={1.2} />Configure Repl</PaneTab>
        <PaneTab $w={93} $active $focus><AgentMark />Agent</PaneTab>
        <PlainButton $w={32} $h={32} $color="#9ba0a9" aria-label="New tab"><Plus size={13} {...thin} /></PlainButton>
      </PaneTabs>
      <AgentBody>
        <RevertBar>
          <PlainButton aria-label="History"><History size={16} {...thin} /></PlainButton>
          <RevertTitle><Speed />Revert to: 'Use blue buttons with white text and black text for all other elements'</RevertTitle>
          <PlainButton aria-label="New chat"><Plus size={15} {...thin} /></PlainButton>
        </RevertBar>
        <Rollback>
          <RotateCcw size={17} {...thin} />
          <p>Rolled back to 'Use blue buttons with white text and black text for all other elements'</p>
          <RollbackMeta>Finished 1 minute ago<CornerDownRight size={12} {...thin} /><a href="#original">View original chat</a></RollbackMeta>
        </Rollback>
        <ChatDivider>New chat</ChatDivider>
        <AgentMessage>I've finished reverting, what should I do now?</AgentMessage>
        <Composer onSubmit={(e) => e.preventDefault()}>
          <ComposerStatus>Agent is ready</ComposerStatus>
          <ComposerBox>
            <Prompt aria-label="Message" defaultValue="make the slider button and that three dot button white as it was." />
            <ComposerTools>
              <PlainButton type="button" aria-label="Attach"><Clip /></PlainButton>
              <SelectTool type="button"><Target />Select</SelectTool>
              <PlainButton type="button" aria-label="Options"><SlidersVertical size={17} {...thin} /></PlainButton>
              <SendButton aria-label="Send"><Send /></SendButton>
            </ComposerTools>
          </ComposerBox>
        </Composer>
      </AgentBody>
    </Panel>
  );
}

function PreviewSite() {
  return (
    <Site>
      <Sidebar>
        <SidebarBody>
          <CollapseButton aria-label="Collapse sidebar"><ChevronsLeft size={22} strokeWidth={3} /></CollapseButton>
          <Brand>
            <Shield />
            <BrandName>SafeData Pipeline</BrandName>
            <BrandSub>Government of India</BrandSub>
          </Brand>
          <SiteNav>
            {SITE_LINKS.map(([label, icon, active]) => (
              <SiteLink key={label} href={"#" + label} $active={active}>{icon}{label}</SiteLink>
            ))}
            <SiteLink href="#settings" aria-label="Settings"><BsGear size={18} /></SiteLink>
          </SiteNav>
        </SidebarBody>
        <ScrollRail><ScrollThumb /></ScrollRail>
      </Sidebar>
      <SiteMain>
        <section>
          <Card />
          <SectionTitle>📊 Data Processing Pipeline</SectionTitle>
          <Notice>Upload a dataset to begin the privacy protection pipeline</Notice>
          <Card />
          <SectionTitle>🚀 Quick Start Guide</SectionTitle>
          <Intro>Get started with SafeData Pipeline in 5 simple steps:</Intro>
          <Steps><li>📂 Upload Data - Import your dataset (CSV,</li></Steps>
        </section>
        <section>
          <Card />
          <SectionTitle>🎯 Current Session</SectionTitle>
          <Notice $warn>No dataset loaded. Start by uploading your data.</Notice>
          <Card />
          <SectionTitle>⚡ Quick Actions</SectionTitle>
        </section>
      </SiteMain>
      <SiteMenuButton aria-label="Site menu"><EllipsisVertical size={17} strokeWidth={2} /></SiteMenuButton>
    </Site>
  );
}

function PreviewPane() {
  return (
    <Panel>
      <PaneTabs>
        <PaneTab $w={104} $active><Monitor size={16} {...thin} />Preview</PaneTab>
        <PlainButton $w={32} $h={32} $color="#9ba0a9" aria-label="New tab"><Plus size={13} {...thin} /></PlainButton>
        <PaneMore $w={32} $h={32} aria-label="More"><EllipsisVertical size={15} {...thin} /></PaneMore>
      </PaneTabs>
      <NavBar>
        <PlainButton $w={28} $h={24} aria-label="Back"><ArrowLeft size={16} {...thin} /></PlainButton>
        <PlainButton $w={28} $h={24} aria-label="Forward"><ArrowRight size={16} {...thin} /></PlainButton>
        <PlainButton $w={28} $h={24} $color="#f5f7fa" aria-label="Reload"><RotateCw size={17} {...thin} /></PlainButton>
        <UrlBox>
          <Link size={12} {...thin} />
          .replit.dev
          <PathInput aria-label="Path" defaultValue="/" />
          <PlainButton $w={22} $h={24} aria-label="Go"><ArrowRight size={11} /></PlainButton>
        </UrlBox>
        <PlainButton $w={26} $h={24} aria-label="Devices"><MonitorSmartphone size={16} {...thin} /></PlainButton>
        <PlainButton $w={26} $h={24} $color="#c0c4cc" aria-label="Tools"><Wrench size={15} {...thin} /></PlainButton>
        <PlainButton $w={26} $h={24} $color="#c0c4cc" aria-label="Open in new tab"><SquareArrowOutUpRight size={15} {...thin} /></PlainButton>
      </NavBar>
      <ShareBar>
        <Info size={16} {...thin} />
        Ready to share with the world?
        <ShareDeploy><GlobeUp size={12} />Deploy</ShareDeploy>
        <PlainButton $color="#e6f2ff" aria-label="Dismiss"><X size={15} {...thin} /></PlainButton>
      </ShareBar>
      <PreviewSite />
    </Panel>
  );
}

function WindowsTaskbar() {
  return (
    <Taskbar>
      <PlainButton $w={48} $h={40} aria-label="Start"><FaWindows size={18} color="#fff" /></PlainButton>
      <WinSearch>
        <Loupe />
        <WinSearchInput aria-label="Search" placeholder="Type here to search" />
        <Books />
      </WinSearch>
      <TaskButton $gap={3} aria-label="Task view"><TaskView /></TaskButton>
      {TASKS.map(([label, icon, state]) => (
        <TaskButton key={label} aria-label={label} $open={state === "open"} $active={state === "active"}>{icon}</TaskButton>
      ))}
      <Tray>
        <PlainButton $w={24} $h={40} aria-label="Hidden icons"><ChevronUp size={17} strokeWidth={1.6} /></PlainButton>
        <PlainButton $w={24} $h={40} aria-label="Microphone"><Mic /></PlainButton>
        <PlainButton $w={24} $h={40} aria-label="Update"><Sync /></PlainButton>
        <PlainButton $w={24} $h={40} aria-label="Meet now"><MeetNow /></PlainButton>
        <PlainButton $w={28} $h={40} aria-label="Network"><Network /></PlainButton>
        <span>ENG</span>
        <Clock>11:42<br />05-08-2025</Clock>
        <PlainButton $w={18} $h={40} aria-label="Notifications"><Bubble /></PlainButton>
        <DesktopEdge />
      </Tray>
    </Taskbar>
  );
}

export default function App() {
  return (
    <Screen>
      <GlobalStyle />
      <BrowserFrame />
      <ReplitHeader />
      <Workspace>
        <SideRail />
        <AgentPane />
        <Splitter />
        <PreviewPane />
      </Workspace>
      <WindowsTaskbar />
    </Screen>
  );
}
